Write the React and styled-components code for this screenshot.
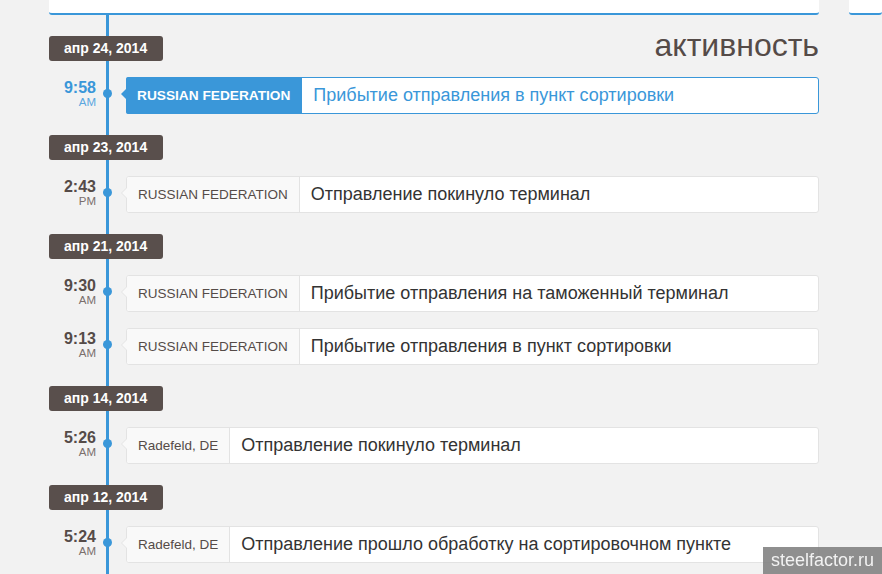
import React from 'react';
import styled, { createGlobalStyle } from 'styled-components';

const Global = createGlobalStyle`
  html, body {
    margin: 0;
    padding: 0;
    background: #f2f2f2;
    font-family: "Liberation Sans", Arial, sans-serif;
    overflow: hidden;
  }
`;

const Page = styled.div`
  padding-left: 49px;
`;

const TopRow = styled.div`
  display: flex;
  gap: 30px;
`;

const TopCard = styled.div`
  height: 13px;
  background: #fff;
  border-bottom: 2px solid #3a97d9;
  border-radius: 0 0 3px 3px;
  width: ${(p) => (p.wide ? '770px' : 'auto')};
  flex: ${(p) => (p.wide ? 'none' : '1')};
`;

const Timeline = styled.div`
  position: relative;
  width: 770px;
  padding-bottom: 40px;

  &::before {
    content: '';
    position: absolute;
    top: 0;
    bottom: 0;
    left: 57px;
    width: 3px;
    background: #3a97d9;
  }
`;

const Group = styled.div`
  position: relative;
  padding-top: 21px;
`;

const GroupHead = styled.div`
  display: flex;
  justify-content: space-between;
  align-items: flex-start;
  height: 25px;
`;

const Badge = styled.div`
  position: relative;
  z-index: 1;
  background: #594f4c;
  color: #fff;
  font-size: 14px;
  font-weight: bold;
  line-height: 25px;
  padding: 0 15px 0 15px;
  min-width: 84px;
  border-radius: 3px;
`;

const Heading = styled.h2`
  margin: -11px 0 0;
  font-size: 32px;
  font-weight: normal;
  color: #554b48;
  line-height: 40px;
`;

const Row = styled.div`
  display: flex;
  align-items: flex-start;
  margin-top: 16px;
`;

const Time = styled.div`
  width: 47px;
  text-align: right;
  padding-top: 3px;
  color: ${(p) => (p.active ? '#3a97d9' : '#554b48')};

  b {
    display: block;
    font-size: 16px;
    line-height: 16px;
  }
  span {
    display: block;
    font-size: 11.5px;
    line-height: 12px;
    color: ${(p) => (p.active ? '#5aa6df' : '#7a6f6c')};
  }
`;

const Marker = styled.div`
  position: relative;
  z-index: 1;
  width: 30px;
  flex: none;
  padding-top: 12px;
  padding-left: 7px;
  box-sizing: border-box;

  &::after {
    content: '';
    display: block;
    width: 9px;
    height: 9px;
    border-radius: 50%;
    background: #3a97d9;
  }
`;

const Card = styled.div`
  position: relative;
  flex: 1;
  display: flex;
  height: 35px;
  background: #fff;
  border: 1px solid ${(p) => (p.active ? '#3a97d9' : '#e3e3e3')};
  border-radius: 3px;

  &::before {
    content: '';
    position: absolute;
    left: -6px;
    top: 10px;
    border-style: solid;
    border-width: 6px 6px 6px 0;
    border-color: transparent ${(p) => (p.active ? '#3a97d9' : '#e3e3e3')} transparent transparent;
  }
  &::after {
    content: '';
    position: absolute;
    left: -5px;
    top: 11px;
    border-style: solid;
    border-width: 5px 5px 5px 0;
    border-color: transparent ${(p) => (p.active ? '#3a97d9' : '#f9f9f9')} transparent transparent;
  }
`;

const Place = styled.div`
  display: flex;
  align-items: center;
  padding: 0 11px;
  font-size: ${(p) => (p.active ? '13.7px' : '13.5px')};
  font-weight: ${(p) => (p.active ? 'bold' : 'normal')};
  background: ${(p) => (p.active ? '#3a97d9' : '#f9f9f9')};
  color: ${(p) => (p.active ? '#fff' : '#554b48')};
  border-right: 1px solid ${(p) => (p.active ? '#3a97d9' : '#e3e3e3')};
  border-radius: 2px 0 0 2px;
  margin: ${(p) => (p.active ? '-1px 0 -1px -1px' : '0')};
  white-space: nowrap;
`;

const Message = styled.div`
  display: flex;
  align-items: center;
  padding: 0 11px;
  font-size: 18px;
  color: ${(p) => (p.active ? '#3a97d9' : '#333')};
  white-space: nowrap;
`;

const Watermark = styled.div`
  position: fixed;
  right: 0;
  bottom: 0;
  width: 119px;
  height: 27px;
  line-height: 27px;
  text-align: center;
  background: rgba(128, 128, 128, 0.88);
  color: #f2f2f2;
  font-size: 18px;
`;

const groups = [
  {
    date: 'апр 24, 2014',
    heading: 'активность',
    rows: [
      { t: '9:58', p: 'AM', place: 'RUSSIAN FEDERATION', msg: 'Прибытие отправления в пункт сортировки', active: true },
    ],
  },
  {
    date: 'апр 23, 2014',
    rows: [{ t: '2:43', p: 'PM', place: 'RUSSIAN FEDERATION', msg: 'Отправление покинуло терминал' }],
  },
  {
    date: 'апр 21, 2014',
    rows: [
      { t: '9:30', p: 'AM', place: 'RUSSIAN FEDERATION', msg: 'Прибытие отправления на таможенный терминал' },
      { t: '9:13', p: 'AM', place: 'RUSSIAN FEDERATION', msg: 'Прибытие отправления в пункт сортировки' },
    ],
  },
  {
    date: 'апр 14, 2014',
    rows: [{ t: '5:26', p: 'AM', place: 'Radefeld, DE', msg: 'Отправление покинуло терминал' }],
  },
  {
    date: 'апр 12, 2014',
    rows: [{ t: '5:24', p: 'AM', place: 'Radefeld, DE', msg: 'Отправление прошло обработку на сортировочном пункте' }],
  },
];

export default function App() {
  return (
    <>
      <Global />
      <Page>
        <TopRow>
          <TopCard wide />
          <TopCard />
        </TopRow>
        <Timeline>
          {groups.map((g) => (
            <Group key={g.date}>
              <GroupHead>
                <Badge>{g.date}</Badge>
                {g.heading && <Heading>{g.heading}</Heading>}
              </GroupHead>
              {g.rows.map((r) => (
                <Row key={r.t}>
                  <Time active={r.active}>
                    <b>{r.t}</b>
                    <span>{r.p}</span>
                  </Time>
                  <Marker />
                  <Card active={r.active}>
                    <Place active={r.active}>{r.place}</Place>
                    <Message active={r.active}>{r.msg}</Message>
                  </Card>
                </Row>
              ))}
            </Group>
          ))}
        </Timeline>
      </Page>
      <Watermark>steelfactor.ru</Watermark>
    </>
  );
}
